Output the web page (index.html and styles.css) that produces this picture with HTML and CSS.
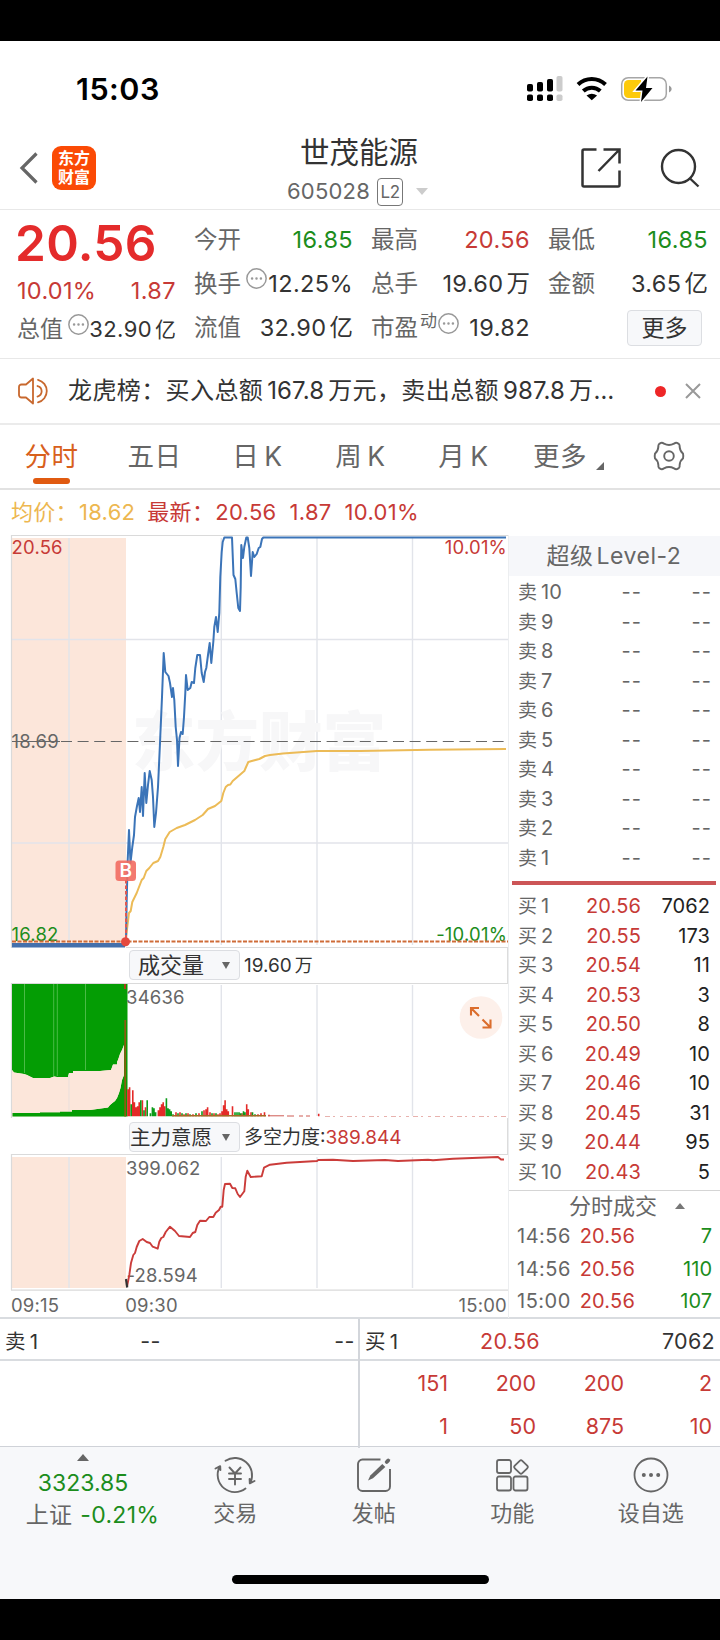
FILE: index.html
```html
<!DOCTYPE html>
<html lang="zh-CN">
<head>
<meta charset="utf-8">
<title>世茂能源 605028</title>
<link rel="stylesheet" href="styles.css">
</head>
<body>
<div class="screen">
  <header class="status">
    <span class="clock">15:03</span>
    <svg class="status-icons" width="150" height="34" viewBox="522 72 150 34">
      <g fill="#000"><rect x="527" y="84" width="6" height="7.500" rx="1.800"/><rect x="537" y="82" width="6" height="9.500" rx="1.800"/><rect x="547" y="79" width="6" height="12.500" rx="1.800"/><rect x="527" y="94.500" width="6" height="6.500" rx="1.800"/><rect x="537" y="94.500" width="6" height="6.500" rx="1.800"/><rect x="547" y="94.500" width="6" height="6.500" rx="1.800"/></g>
      <g fill="#ccc"><rect x="556.500" y="76" width="6" height="15.500" rx="1.800"/><rect x="556.500" y="94.500" width="6" height="6.500" rx="1.800"/></g>
      <g fill="none" stroke="#000" stroke-width="4"><path d="M578 84.500a20 20 0 0 1 27.500 0"/><path d="M583.300 91a12.500 12.500 0 0 1 17 0"/></g>
      <path d="M586.500 95.500q5.200-3.600 10.600 0l-5.300 4.800z"/>
      <rect x="621.700" y="77.700" width="44.600" height="22.600" rx="6.500" fill="#fff" stroke="#a6a6a6" stroke-width="1.500"/>
      <path d="M628.500 80H641v18h-12.500a4.500 4.500 0 0 1-4.500-4.500v-9a4.500 4.500 0 0 1 4.500-4.500z" fill="#fdca0a"/>
      <path d="M669 85.500q2.700 1.300 2.700 3.500t-2.700 3.500z" fill="#999"/>
      <path d="M647.500 76.500l-12 14h7l-1.500 11.500 11.500-14h-6.500z" stroke="#fff" stroke-width="3"/><path d="M647.500 76.500l-12 14h7l-1.500 11.500 11.500-14h-6.500z"/>
    </svg>
  </header>

  <div class="titlebar">
    <svg class="back" width="20" height="34" viewBox="0 0 20 34"><path d="M17.500 2.500L3 17l14.500 14.500" fill="none" stroke="#666" stroke-width="3.200"/></svg>
    <div class="logo"><span>东方</span><span>财富</span></div>
    <div class="title">
      <h1>世茂能源</h1>
      <div class="code">605028<span class="l2">L2</span><i class="tri-down"></i></div>
    </div>
    <svg class="share" width="42" height="42" viewBox="0 0 42 42"><g fill="none" stroke="#333" stroke-width="2.500"><path d="M17.500 3.500H5a1.500 1.500 0 0 0-1.500 1.500v34A1.500 1.500 0 0 0 5 40.500h34a1.500 1.500 0 0 0 1.500-1.500V24.500"/><path d="M24.500 3.500h16v14M40 4L19.500 25"/></g></svg>
    <svg class="search" width="42" height="42" viewBox="0 0 42 42"><g fill="none" stroke="#333" stroke-width="2.400"><circle cx="19.500" cy="19.500" r="16.500"/><path d="M30.500 31l9 8.500"/></g></svg>
  </div>

  <section class="quote">
    <div class="q-main">
      <div class="last">20.56</div>
      <div class="pair red chg"><span>10.01%</span><span>1.87</span></div>
      <div class="pair cap"><span class="lbl">总值<svg class="dots" viewBox="0 0 20 20"><circle cx="10" cy="10" r="9.200"/><path d="M5.800 10h.01M10 10h.01M14.200 10h.01"/></svg></span><span class="small">32.90<b>亿</b></span></div>
    </div>
    <div class="q-col">
      <div class="pair"><span class="lbl">今开</span><span class="green">16.85</span></div>
      <div class="pair"><span class="lbl">换手<svg class="dots" viewBox="0 0 20 20"><circle cx="10" cy="10" r="9.200"/><path d="M5.800 10h.01M10 10h.01M14.200 10h.01"/></svg></span><span>12.25%</span></div>
      <div class="pair"><span class="lbl">流值</span><span>32.90<b>亿</b></span></div>
    </div>
    <div class="q-col">
      <div class="pair"><span class="lbl">最高</span><span class="red">20.56</span></div>
      <div class="pair"><span class="lbl">总手</span><span>19.60<b>万</b></span></div>
      <div class="pair"><span class="lbl">市盈<sup>动</sup><svg class="dots pe" viewBox="0 0 20 20"><circle cx="10" cy="10" r="9.200"/><path d="M5.800 10h.01M10 10h.01M14.200 10h.01"/></svg></span><span>19.82</span></div>
    </div>
    <div class="q-col">
      <div class="pair"><span class="lbl">最低</span><span class="green">16.85</span></div>
      <div class="pair"><span class="lbl">金额</span><span>3.65<b>亿</b></span></div>
      <button class="more">更多</button>
    </div>
  </section>

  <section class="news">
    <svg width="32" height="28" viewBox="0 0 32 28"><g fill="none" stroke="#c8682e" stroke-width="1.800" stroke-linejoin="round" stroke-linecap="round"><path d="M15 1.500v25L8 20.500H3.500A2.500 2.500 0 0 1 1 18v-8a2.500 2.500 0 0 1 2.500-2.500H8z"/><path d="M19.500 9a5.400 5.400 0 0 1 0 10.500M20 2.800a11.600 11.600 0 0 1 0 22.500"/></g></svg>
    <p>龙虎榜：买入总额<span>167.8</span>万元，卖出总额<span>987.8</span>万…</p>
    <i class="dot"></i>
    <svg width="16" height="16" viewBox="0 0 16 16"><path d="M1 1l14 14M15 1L1 15" stroke="#999" stroke-width="2"/></svg>
  </section>

  <nav class="tabs">
    <span class="on">分时</span><span>五日</span><span>日<em>K</em></span><span>周<em>K</em></span><span>月<em>K</em></span><span class="tab-more">更多<i></i></span>
    <svg width="32" height="30" viewBox="-16 -15 32 30"><g fill="none" stroke="#666" stroke-width="1.900" stroke-linejoin="round"><path d="M-8-13.200Q-6.500-13.600-5-12.300Q0-9.700 5-12.300Q6.500-13.600 8-13.200L9.800-12.200Q11-11 10.600-9.300Q11-4.500 14-2.500Q14.600 0 14 2.500Q11 4.500 10.600 9.300Q11 11 9.800 12.200L8 13.200Q6.500 13.600 5 12.300Q0 9.700-5 12.300Q-6.500 13.600-8 13.200L-9.800 12.200Q-11 11-10.600 9.300Q-11 4.500-14 2.500Q-14.600 0-14-2.500Q-11-4.500-10.600-9.300Q-11-11-9.800-12.200Z"/><circle r="4.800"/></g></svg>
  </nav>

  <div class="legend"><span class="avg">均价：<em>18.62</em></span><span class="now">最新：<em>20.56</em></span><span class="now">1.87</span><span class="now">10.01%</span></div>

  <main class="market">
    <section class="charts">
      <svg class="chart" width="508" height="413" viewBox="0 535 508 413">
        <rect x="12" y="538" width="114" height="409" fill="#fce6da"/>
        <g class="grid"><path d="M69 538V941M221.300 538V945M317 538V945M412.500 538V945M12 639.500H508M12 843H508"/></g>
        <path d="M11.500 948V535.500H508M126 947.500H508M507.500 947V948" class="frame"/>
        <text x="132" y="765" class="mark">东方财富</text>
        <path d="M12 741.500H60" class="mid"/><path d="M61 741.500H504" class="mid" stroke-dasharray="11 5.600"/>
        <text x="11.500" y="747.500" class="t">18.69</text>
        <rect x="12" y="943" width="113" height="4.500" fill="#4470ac"/>
        <polyline class="avgline" points="126,938 127.300,927 129,913 130.700,911 132.300,902 136.700,893 141.700,880 143.700,878 146.300,871 149.300,868 153.300,863 158,861 160.300,857 163.300,847 165.300,839 169.700,832 176.700,828 185,825 195,820 202.700,815 208,809 215,806 221.300,801 223.300,793 225.700,787 228,785 230.300,784.500 232.700,781 244.300,771 248.300,762 251.700,761 259.300,759 265,756 270,755 283,753.500 300,752.300 317,751 360,751 430,749.700 506,749"/>
        <polyline class="price" points="126,941 126.700,900 127.700,860 129,830 130.500,863 132.300,847 134,835 135,817 137,806 138.700,798 140,812 141.700,787 143,816 144.700,773 146.300,803 148,785 149.700,771 151.700,780 153,797 154.300,827 156,813 158,787 160,743 162,697 163.700,653 165.300,672 168.500,676 170,683 172,697 173,688 174.300,700 175.700,727 177,740 178,766 179.500,738 181,732 182.700,734 184,717 185.300,693 186,675 187.700,690 190.300,688 191.700,682 194,683 195.300,668 197.300,655 200,655 201.700,673 203.700,682 205,672 206.300,668 208,655 209.700,643 211.300,663 213.300,642 214.300,627 216,617 217.700,632 219.300,613 220.300,577 221.700,552 222.700,542 224.300,537.500 232,537.500 233.500,575 235.300,579 236.700,593 238.300,608 240,611 240.700,587 241.300,545 243,558 244.300,547 246.300,537.500 247.700,537.500 249.300,548 251,576 252.700,552 254.300,557 256.700,554 258.700,548 260.300,547 262,539 263.300,537.500 506,537.500"/>
        <text x="11.500" y="554" class="t red">20.56</text><text x="507" y="554" class="t red end">10.01%</text>
        <text x="11.500" y="940.500" class="t green">16.82</text><text x="507" y="940.500" class="t green end">-10.01%</text>
        <path d="M12 941.500H508" stroke="#cf6c38" stroke-width="1.800" stroke-dasharray="4 1.500"/>
        <path d="M126 880V938" stroke="#e25750" stroke-width="2" stroke-dasharray="3.500 2"/>
        <circle cx="125.500" cy="941.800" r="4.500" fill="#e5493e"/>
        <rect x="115.500" y="860.500" width="20.500" height="20.500" rx="3.500" fill="#f26c60" fill-opacity=".9"/><text x="125.800" y="877.200" class="b">B</text>
      </svg>
      <div class="tool first"><div class="select"><span>成交量</span><i></i></div><span class="val">19.60<b>万</b></span></div>
      <svg class="chart" width="508" height="135" viewBox="0 983 508 135">
        <rect x="12" y="984" width="114" height="132.500" fill="#fce6da"/>
        <path class="grid" d="M69 985V1116M221.300 985V1116M317 985V1116M412.500 985V1116"/>
        <path class="frame" d="M11.500 1118V983.500H508"/>
        <path fill="#049d04" d="M12 984H127.500V1116.500H12.500V1113H40V1112.300H60V1111.500H72V1110H90L108 1107.500 110 1105 113 1102.500 115 1101 117 1098 119 1093 120.500 1088 122 1080 124 1075V1045L122 1050 120 1054 118 1060 117 1062V1064.500H113L111 1070 100 1071H73V1073H69L68 1077H57L54 1076.500 50 1078H33L27 1075 24 1074 14 1072.500 12 1070z"/>
        <path fill="#fce6da" d="M124 1045V1075L122 1080 120.500 1088 119 1093 117 1098 115 1101 113 1102.500 110 1105 108 1107.500 90 1110H72V1111.500H60V1112.300H40V1113H12.500L12 1070 14 1072.500 24 1074 27 1075 33 1078H50L54 1076.500 57 1077H68L69 1073H73V1071.500L100 1071 111 1070 113 1064.500H117V1062L118 1060 120 1054 122 1050z"/>
        <path stroke="#69c863" stroke-width=".7" d="M24.500 984V1073M53.700 984V1076M57.300 984V1076M85.500 984V1070"/>
        <path stroke="#e9dfdc" d="M69 1075V1111"/>
        <path stroke="#8b5b10" stroke-width="1.800" d="M125.200 1020V1116.500"/><path stroke="#d32720" stroke-width="1.600" d="M125 984v5"/>
        <g fill="none" stroke-width="1.600"><path stroke="#e42a28" d="M128 1116.300v-27M129.600 1116.300v-29M132.800 1116.300v-26M134.400 1116.300v-14M136 1116.300v-9M137.600 1116.300v-10M139.200 1116.300v-14M142.400 1116.300v-16M145.500 1116.300v-9M158.400 1116.300v-6M160 1116.300v-9M161.600 1116.300v-12M163.200 1116.300v-14M164.800 1116.300v-10M176 1116.300v-4M180 1116.300v-4M184 1116.300v-2M188 1116.300v-3M193 1116.300v-2M199 1116.300v-3M204 1116.300v-6M206 1116.300v-7M207.600 1116.300v-9M210 1116.300v-4M214 1116.300v-3M218 1116.300v-2M220 1116.300v-3M222 1116.300v-5M223.600 1116.300v-11M225.100 1116.300v-16M226.700 1116.300v-7M228.300 1116.300v-5M232.500 1116.300v-10M242 1116.300v-3M246.700 1116.300v-12M248.300 1116.300v-7M251 1116.300v-4M258 1116.300v-2M261 1116.300v-3M264.500 1116.300v-4M269 1116.300v-1.500M318.700 1116.300v-2.500"/><path stroke="#0b9b18" d="M131.200 1116.300v-12M140.800 1116.300v-16M147.200 1116.300v-16M144 1116.300v-6M150.400 1116.300v-3M152.400 1116.300v-9M154 1116.300v-8M155.600 1116.300v-4M166.400 1116.300v-18M168 1116.300v-8M169.600 1116.300v-7M171.200 1116.300v-5M173 1116.300v-2M178 1116.300v-3M182 1116.300v-3M186 1116.300v-3M190 1116.300v-2M196 1116.300v-3M202 1116.300v-5M212 1116.300v-3M216 1116.300v-3M235 1116.300v-4M237 1116.300v-4M239 1116.300v-4M240.700 1116.300v-3M243.500 1116.300v-5M245 1116.300v-4M252.500 1116.300v-4M255 1116.300v-2"/></g>
        <path stroke="#a36a24" stroke-width="1.500" d="M172 1115.700H266"/><path stroke="#cf5c55" d="M268 1115.800H284M287 1116H294M299 1116H303M306 1116H310"/><path stroke="#cf5c55" stroke-opacity=".6" stroke-width=".8" d="M325 1116.500H507" stroke-dasharray="5 3 2 5 3 4"/>
        <text x="126" y="1003.500" class="t">34636</text>
        <circle cx="481" cy="1017.500" r="21.300" fill="#fdf0ea"/><path d="M479 1016l-8-8m0 7.500v-7.500h8M482.500 1019.500l8 8m-8 0h8v-8" fill="none" stroke="#db6d2c" stroke-width="2.100"/>
      </svg>
      <div class="tool second"><div class="select wide"><span>主力意愿</span><i></i></div><span class="val">多空力度:<span class="red">389.844</span></span></div>
      <svg class="chart" width="508" height="137" viewBox="0 1154 508 137">
        <rect x="12" y="1157" width="114" height="131" fill="#fce6da"/>
        <path class="grid" d="M69 1157V1288M221.300 1157V1288M317 1157V1288M412.500 1157V1288"/>
        <path class="frame" d="M11.500 1290V1154.500H508M11 1290.200H508"/>
        <text x="126" y="1175" class="t">399.062</text><text x="126.500" y="1282" class="t">-28.594</text>
        <polyline class="power" points="127,1286.700 129.300,1275 131,1263 133.300,1255 135,1253 136.700,1247 139.300,1241 142.700,1239 146.700,1242 150,1243 152.700,1246.700 157.700,1248.700 159.300,1241.700 161.300,1238 163.300,1237 165.700,1232 170,1226.700 175,1231 179,1236 190,1237 192.700,1233 195.300,1232 197.300,1225 200,1220.700 206,1221 209.300,1217 213.300,1217 215.700,1212.700 219,1210 220.700,1206.700 222.300,1206.700 223.700,1190 225,1184 230,1183.700 232.300,1188 235.300,1188.300 237.700,1194 240,1197 244.300,1191.300 245.700,1176.700 247.300,1170.700 250.700,1177 261.700,1176.300 264,1167.700 270,1164.700 286.700,1162.700 300,1162 317,1161 318.300,1160 333,1159.700 353,1161 385,1160 398,1161 428,1159.700 433,1160.300 453,1158.700 498,1157 501,1159.500 504,1159.500"/>
        <path d="M126 1279l1.200 8.500" stroke="#333" stroke-width="2.200"/>
      </svg>
      <div class="times"><span>09:15</span><span>09:30</span><span>15:00</span></div>
    </section>

    <aside class="book">
      <h2>超级<em>Level-2</em></h2>
      <div class="asks">
        <div class="row"><span>卖<em>10</em></span><span class="na">--</span><span class="na">--</span></div>
        <div class="row"><span>卖<em>9</em></span><span class="na">--</span><span class="na">--</span></div>
        <div class="row"><span>卖<em>8</em></span><span class="na">--</span><span class="na">--</span></div>
        <div class="row"><span>卖<em>7</em></span><span class="na">--</span><span class="na">--</span></div>
        <div class="row"><span>卖<em>6</em></span><span class="na">--</span><span class="na">--</span></div>
        <div class="row"><span>卖<em>5</em></span><span class="na">--</span><span class="na">--</span></div>
        <div class="row"><span>卖<em>4</em></span><span class="na">--</span><span class="na">--</span></div>
        <div class="row"><span>卖<em>3</em></span><span class="na">--</span><span class="na">--</span></div>
        <div class="row"><span>卖<em>2</em></span><span class="na">--</span><span class="na">--</span></div>
        <div class="row"><span>卖<em>1</em></span><span class="na">--</span><span class="na">--</span></div>
      </div>
      <div class="bids">
        <div class="row"><span>买<em>1</em></span><span class="red">20.56</span><span class="vol">7062</span></div>
        <div class="row"><span>买<em>2</em></span><span class="red">20.55</span><span class="vol">173</span></div>
        <div class="row"><span>买<em>3</em></span><span class="red">20.54</span><span class="vol">11</span></div>
        <div class="row"><span>买<em>4</em></span><span class="red">20.53</span><span class="vol">3</span></div>
        <div class="row"><span>买<em>5</em></span><span class="red">20.50</span><span class="vol">8</span></div>
        <div class="row"><span>买<em>6</em></span><span class="red">20.49</span><span class="vol">10</span></div>
        <div class="row"><span>买<em>7</em></span><span class="red">20.46</span><span class="vol">10</span></div>
        <div class="row"><span>买<em>8</em></span><span class="red">20.45</span><span class="vol">31</span></div>
        <div class="row"><span>买<em>9</em></span><span class="red">20.44</span><span class="vol">95</span></div>
        <div class="row"><span>买<em>10</em></span><span class="red">20.43</span><span class="vol">5</span></div>
      </div>
      <div class="trades">
        <h3>分时成交<i></i></h3>
        <div class="row"><span>14:56</span><span class="red">20.56</span><span class="green">7</span></div>
        <div class="row"><span>14:56</span><span class="red">20.56</span><span class="green">110</span></div>
        <div class="row"><span>15:00</span><span class="red">20.56</span><span class="green">107</span></div>
      </div>
    </aside>
  </main>

  <section class="queue">
    <div class="side sell"><div class="head"><span>卖<em>1</em></span><span class="na">--</span><span class="na">--</span></div></div>
    <div class="side buy">
      <div class="head"><span>买<em>1</em></span><span class="red">20.56</span><span>7062</span></div>
      <div class="lots red"><span>151</span><span>200</span><span>200</span><span>2</span><span>1</span><span>50</span><span>875</span><span>10</span></div>
    </div>
  </section>

  <footer class="dock">
    <div class="index"><i></i><span class="green">3323.85</span><span class="sh">上证<em class="green">-0.21%</em></span></div>
    <div class="item"><svg width="42" height="38" viewBox="-21 -19 42 38"><g fill="none" stroke="#666" stroke-width="1.900" stroke-linecap="round" stroke-linejoin="round"><path d="M-9.500-14.300A17.300 17.300 0 0 1 15.500 7.500M19.500 6L14.800 8.300 14.600 4"/><path d="M10.500 13.500A17.300 17.300 0 0 1-15.500-8M-19.500-6.500L-14.800-8.800-14.600-5"/><path d="M-5.500-7.500L0-1.500 5.500-7.500M0-1.500V9.500M-6-1.500H6M-6 4H6"/></g></svg><span>交易</span></div>
    <div class="item"><svg width="42" height="38" viewBox="-21 -19 42 38"><path d="M6.500-15.500H-11.500A4.500 4.500 0 0 0-16-11V11.500A4.500 4.500 0 0 0-11.500 16H11.500A4.500 4.500 0 0 0 16 11.500V-6" fill="none" stroke="#666" stroke-width="1.900"/><path d="M-6 5.500L-3.700.5 8.300-11 11.300-8-1 3.300z" fill="#666"/><path d="M12.700-13l1.500-1.500" stroke="#666" stroke-width="3.800" stroke-linecap="round"/></svg><span>发帖</span></div>
    <div class="item"><svg width="42" height="38" viewBox="-21 -19 42 38"><g fill="none" stroke="#666" stroke-width="1.800"><rect x="-15" y="-15" width="14" height="13" rx="2"/><rect x="-15" y="1.500" width="14" height="14" rx="2"/><rect x="1.500" y="1.500" width="14" height="14" rx="2"/><rect x="-5.300" y="-5.300" width="10.600" height="10.600" rx="1.800" transform="translate(9 -8) rotate(45)"/></g></svg><span>功能</span></div>
    <div class="item"><svg width="42" height="38" viewBox="-21 -19 42 38"><circle r="16.500" cy="0" fill="none" stroke="#666" stroke-width="1.800"/><path d="M-7.200 0h.01M0 0h.01M7.200 0h.01" stroke="#666" stroke-width="4" stroke-linecap="round"/></svg><span>设自选</span></div>
    <div class="home"></div>
  </footer>
</div>
</body>
</html>
```

FILE: styles.css
```css
* { box-sizing: border-box; margin: 0; padding: 0; }
body { background: #000; font-family: Inter, "Noto Sans CJK SC", sans-serif; color: #333; }
em, i, b { font-style: normal; font-weight: inherit; }
svg { display: block; flex: none; }
.screen { width: 720px; height: 1558px; margin: 41px 0; background: #fff; overflow: hidden; }
.red { color: #c73a36; fill: #c73a36; }
.green { color: #1c8d1c; fill: #1c8d1c; }

.status { height: 93px; display: flex; justify-content: space-between; padding: 31px 48px 0 76px; }
.clock { font-size: 30.500px; font-weight: 600; line-height: 34px; color: #000; letter-spacing: .5px; }

.titlebar { height: 76px; display: flex; border-bottom: 1.500px solid #e8e8e8; }
.back { margin: 17px 0 0 19px; }
.logo { width: 44px; height: 44px; margin: 12px 0 0 13px; border-radius: 9px; background: #fb4a05; color: #fff; font-size: 16px; font-weight: 700; line-height: 19px; padding-top: 3px; display: flex; flex-direction: column; align-items: center; flex: none; }
.title { flex: 1; padding-left: 191px; }
.title h1 { font-size: 29.500px; font-weight: 400; line-height: 37px; padding-left: 13px; white-space: nowrap; }
.code { display: flex; align-items: center; height: 40px; font-size: 22px; color: #666; letter-spacing: .2px; }
.l2 { width: 26px; height: 28px; margin: 1px 0 0 7px; border: 1.500px solid #777; border-radius: 4px; font-size: 17px; line-height: 26px; text-align: center; letter-spacing: -.5px; flex: none; }
.tri-down { margin-left: 13px; border: 6.500px solid transparent; border-top: 7px solid #ccc; border-bottom: 0; }
.share { margin: 12px 0 0; }
.search { margin: 13px 19px 0 38px; }

.quote { height: 149px; display: grid; grid-template-columns: 159px 159px 159px 160px; column-gap: 18px; padding: 8px 0 0 17px; border-bottom: 1px solid #e8e8e8; }
.pair { display: flex; justify-content: space-between; height: 44px; line-height: 44px; font-size: 23.500px; white-space: nowrap; }
.pair > span:last-child { letter-spacing: .4px; }
.pair b { margin-left: 3px; letter-spacing: 0; }
.q-main .last { height: 58px; line-height: 50px; font-size: 49.500px; font-weight: 600; color: #e42b2b; letter-spacing: .3px; margin-left: -2px; }
.q-main .chg { height: 32px; line-height: 30px; margin-top: 0; }
.q-main .chg span:first-child { letter-spacing: .3px; }
.q-main .cap { height: 42px; line-height: 42px; font-size: 23px; }
.q-main .small { font-size: 22px; letter-spacing: 0; }
.q-main .small b { font-size: 21px; }
.lbl { display: flex; color: #666; }
.dots { width: 21px; height: 21px; margin: 6px 0 0 5px; fill: none; stroke: #999; stroke-width: 1.400; stroke-linecap: round; }
.dots path { stroke-width: 2.400; }
.dots.pe { margin-left: 1px; margin-top: 7px; }
sup { font-size: 17px; line-height: 30px; margin-left: 2px; }
.more { width: 75px; height: 36px; margin: 4px 0 0 79px; border: 1.500px solid #dcdee2; border-radius: 4px; background: #f7f8fa; font: 23px/32px Inter, "Noto Sans CJK SC", sans-serif; color: #333; }

.news { height: 66px; display: flex; align-items: center; padding: 0 19px 0 18px; border-bottom: 2px solid #ebebeb; }
.news p { margin-left: 18px; width: 587px; font-size: 24px; line-height: 64px; letter-spacing: .4px; white-space: nowrap; }
.news p span { margin: 0 4px; font-size: 24px; letter-spacing: .1px; }
.dot { width: 11px; height: 11px; border-radius: 50%; background: #ee2627; margin: 0 19px 0 1px; flex: none; }

.tabs { height: 65px; display: flex; border-bottom: 2px solid #e2e2e2; font-size: 26.500px; line-height: 62px; color: #666; white-space: nowrap; }
.tabs span { width: 103px; text-align: center; letter-spacing: .5px; }
.tabs em { margin-left: 5px; }
.tabs .on { color: #d8601c; }
.tabs .on::after { content: ""; display: block; width: 37px; height: 6px; margin: -9px auto 0; border-radius: 3px; background: #e05a10; }
.tabs .tab-more { width: 108px; padding-left: 18px; text-align: left; display: flex; }
.tab-more i { margin: 37px 0 0 9px; border: 4px solid #666; border-top-color: transparent; border-left-color: transparent; width: 8px; height: 8px; }
.tabs svg { margin: 16px 0 0 30px; }

.legend { height: 45px; display: flex; padding: 0 0 0 11px; font-size: 22px; line-height: 44px; letter-spacing: .3px; white-space: nowrap; color: #c73a36; }
.legend span { margin-right: 13px; }
.legend em { margin-left: 1px; }
.legend .avg { color: #edb750; margin-right: 12px; }

.market { height: 784px; display: grid; grid-template-columns: 508px 212px; border-bottom: 2px solid #d9dce0; }
.grid { fill: none; stroke: #e2e4ea; stroke-width: 1.400; }
.frame { fill: none; stroke: #dadada; stroke-width: 1.200; }
.mark { font-size: 63.500px; font-weight: 900; fill: #f7f7f8; }
.mid { stroke: #666; stroke-width: 1.200; }
.price { fill: none; stroke: #3b74b8; stroke-width: 2; stroke-linejoin: round; }
.avgline { fill: none; stroke: #ecbb57; stroke-width: 2; stroke-linejoin: round; }
.power { fill: none; stroke: #cb3c3a; stroke-width: 1.900; stroke-linejoin: round; }
.t { font-size: 18.500px; fill: #666; letter-spacing: .2px; }
.t.red { fill: #c73a36; }
.t.green { fill: #1c8d1c; }
.end { text-anchor: end; }
.b { font-size: 19px; font-weight: 600; fill: #fff; text-anchor: middle; }
.tool { height: 36px; display: flex; padding: 0 0 0 129px; border-right: 1px solid #dcdcdc; }
.tool.first { height: 35px; padding-top: 2px; }
.tool.second { padding-top: 4px; }
.select { width: 111px; height: 30px; border: 1.500px solid #dcdee2; border-radius: 4px; background: #f7f8fa; display: flex; align-items: center; justify-content: space-between; padding: 0 9px 0 8px; font-size: 22px; line-height: 27px; white-space: nowrap; }
.select.wide { font-size: 20.500px; padding-left: 0; }
.select i { border: 4.500px solid transparent; border-top: 7.500px solid #666; border-bottom: 0; }
.val { margin-left: 4px; line-height: 31px; font-size: 19px; white-space: nowrap; }
.val b { margin-left: 3px; font-size: 18px; }
.times { height: 27px; display: flex; padding: 0 1px 0 11px; font-size: 18.500px; line-height: 28px; color: #666; letter-spacing: .2px; }
.times span:nth-child(2) { margin-left: 66px; }
.times span:last-child { margin-left: auto; }

.book { border-left: 1px solid #eceef0; color: #666; }
.book h2 { height: 40px; margin-top: 1px; background: #f6f7fa; font-size: 23px; font-weight: 400; line-height: 41px; text-align: center; letter-spacing: .5px; padding-right: 1px; }
.book h2 em { margin-left: 3px; }
.row { display: grid; grid-template-columns: 56px 71px 69px; padding-left: 8px; height: 29.500px; line-height: 29.500px; font-size: 20px; }
.row span + span { text-align: right; }
.row > span:first-child { padding-left: 1px; font-size: 19px; }
.row em { margin-left: 4px; font-size: 20px; }
.row > span.red { padding-right: 3px; margin-left: -10px; letter-spacing: .15px; }
.row > span.na { letter-spacing: 1px; padding-right: 2px; }
.row > span.na:last-child { padding-right: 1px; }
.vol { color: #222; letter-spacing: .1px; padding-right: 3px; }
.asks { padding-top: 2px; }
.bids { margin-top: 8px; padding-top: 7px; border-top: 4px solid #cc5557; margin-left: 3px; margin-right: 4px; }
.bids .row { padding-left: 5px; }
.trades { margin-top: 3px; border-top: 1.500px solid #d5d5d5; }
.trades h3 { height: 29px; font-size: 22px; font-weight: 400; line-height: 28px; display: flex; align-items: center; padding-left: 60px; }
.trades h3 i { margin-left: 18px; border: 5px solid transparent; border-bottom: 6px solid #777; border-top: 0; }
.trades .row { height: 32.500px; line-height: 32.500px; }
.trades .row > span:first-child { padding-left: 0; font-size: 20px; letter-spacing: .5px; }
.trades .row > span.red { padding-right: 9px; letter-spacing: .2px; }
.trades .row > span.green { padding-right: 1px; }

.queue { height: 128px; display: grid; grid-template-columns: 360px 360px; border-bottom: 1px solid #cfd2d8; font-size: 21.500px; }
.sell { border-right: 2px solid #d3d6db; }
.head { height: 42px; line-height: 45px; border-bottom: 2px solid #d9dce0; display: grid; grid-template-columns: 100px 75px 175px; padding-left: 5px; white-space: nowrap; letter-spacing: .3px; }
.sell .head { grid-template-columns: 60px 96px 194px; }
.head span + span { text-align: right; }
.head em { margin-left: 4px; }
.head span:first-child { font-size: 20.500px; }
.head .na { letter-spacing: .5px; }
.lots { display: grid; grid-template-columns: repeat(4, 88px); line-height: 43px; padding-top: 1px; text-align: right; }

.dock { height: 152px; background: #f7f8fa; display: grid; grid-template-columns: 166px repeat(4, 138.500px); grid-template-rows: 128px 9px; color: #666; font-size: 22px; }
.index { display: flex; flex-direction: column; align-items: center; padding-top: 7px; font-size: 23px; line-height: 32px; }
.index i { border: 6.500px solid transparent; border-bottom: 7px solid #666; border-top: 0; margin-bottom: 6px; }
.sh { padding-left: 19px; white-space: nowrap; letter-spacing: .3px; }
.sh em { margin-left: 8px; }
.item { display: flex; flex-direction: column; align-items: center; padding-top: 9px; line-height: 38px; }
.home { grid-column: 1 / -1; justify-self: center; width: 257px; height: 9px; border-radius: 5px; background: #000; }
```
